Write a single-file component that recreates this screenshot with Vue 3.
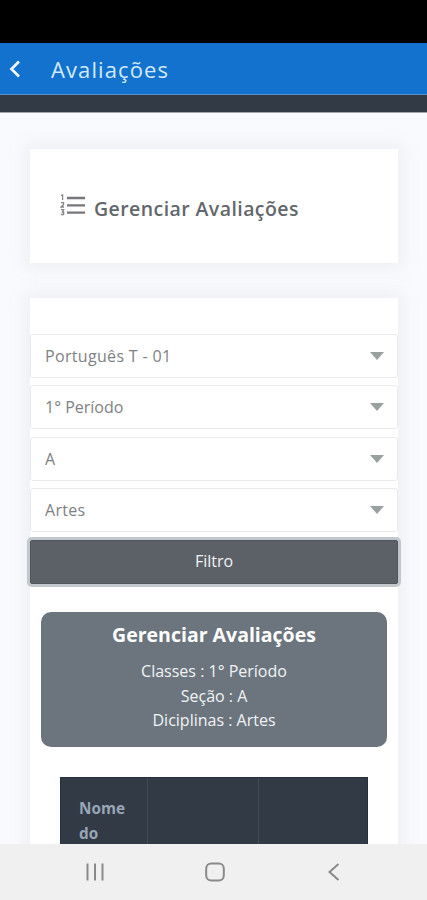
<script setup>
import { ref } from 'vue';

const filters = ref([
  { name: 'curso', value: 'Português T - 01', options: ['Português T - 01'] },
  { name: 'classe', value: '1° Período', options: ['1° Período'] },
  { name: 'secao', value: 'A', options: ['A'] },
  { name: 'disciplina', value: 'Artes', options: ['Artes'] },
]);

const columns = ['Nome do', '', ''];
</script>

<template>
  <div class="screen">
    <div class="status-bar"></div>
    <header class="app-bar">
      <svg class="back-icon" viewBox="0 0 12 18">
        <path d="M10 1.5 L2.5 9 L10 16.5" />
      </svg>
      <span class="app-title">Avaliações</span>
    </header>
    <div class="top-strip"></div>

    <main class="content">
      <section class="card title-card">
        <svg class="list-icon" viewBox="0 0 25 22">
          <path class="lines" d="M7 4 H25 M7 11.3 H25 M7 18.6 H25" />
          <path class="digits" d="M1 1.6 L2.6 1 V6 M1 8.6 H3.5 V10.8 L1 13 H4 M1 15.7 H3.6 L2.4 18 H3.6 V20.5 H.8" />
        </svg>
        <h4 class="page-title">Gerenciar Avaliações</h4>
      </section>

      <section class="card main-card">
        <form class="filters" @submit.prevent>
          <div v-for="filter in filters" :key="filter.name" class="select-box">
            <select v-model="filter.value" class="select" :class="filter.name">
              <option v-for="option in filter.options" :key="option">{{ option }}</option>
            </select>
            <svg class="caret" viewBox="0 0 14 8">
              <path d="M0 0 H14 L7 8 Z" />
            </svg>
          </div>
          <button type="submit" class="filter-button">Filtro</button>
        </form>

        <div class="summary">
          <h4 class="summary-title">Gerenciar Avaliações</h4>
          <p>Classes : 1° Período</p>
          <p>Seção : A</p>
          <p>Diciplinas : Artes</p>
        </div>

        <div class="table">
          <div v-for="(column, index) in columns" :key="index" class="table-head">{{ column }}</div>
        </div>
      </section>
    </main>

    <nav class="nav-bar">
      <svg viewBox="0 0 24 24">
        <path d="M4.5 3.5 V20.5 M12 3.5 V20.5 M19.5 3.5 V20.5" />
      </svg>
      <svg viewBox="0 0 24 24">
        <rect x="3.2" y="3.5" width="17.6" height="17" rx="5" />
      </svg>
      <svg viewBox="0 0 24 24">
        <path d="M16.5 4 L7.5 12 L16.5 20" />
      </svg>
    </nav>
  </div>
</template>

<style>
body {
  background-color: #f9fafd;
}
</style>

<style scoped>
.screen {
  display: flex;
  flex-direction: column;
  height: 900px;
  overflow: hidden;
  background-color: #f9fafd;
  font-family: "Open Sans", "Noto Sans", sans-serif;
}

.status-bar {
  flex: none;
  height: 43px;
  background-color: #000;
}

.app-bar {
  flex: none;
  display: flex;
  align-items: center;
  box-sizing: border-box;
  height: 52px;
  padding-left: 9px;
  background-color: #1272cd;
  border-bottom: 1px solid #5a8fc8;
}

.back-icon {
  width: 12px;
  height: 18px;
  margin-right: 30px;
  fill: none;
  stroke: #f0f8ff;
  stroke-width: 2.7;
}

.app-title {
  color: #d2eaff;
  font-size: 22px;
  letter-spacing: 1.1px;
  line-height: 50px;
}

.top-strip {
  flex: none;
  height: 17px;
  background-color: #323a46;
  border-bottom: 1px solid #a3a7ad;
}

.content {
  flex: 1;
  min-height: 0;
  display: flex;
  flex-direction: column;
  gap: 35px;
  padding: 36px 29px 0 30px;
  overflow: hidden;
}

.card {
  background-color: #fff;
  box-shadow: 0 0 16px 6px rgba(154, 161, 181, 0.1);
}

.title-card {
  flex: none;
  display: flex;
  align-items: center;
  box-sizing: border-box;
  height: 114px;
  padding: 4px 30px 0;
}

.list-icon {
  width: 25px;
  height: 22px;
  margin: -7px 9px 0 0;
  fill: none;
}

.list-icon .lines {
  stroke: #75777b;
  stroke-width: 2.3;
}

.list-icon .digits {
  stroke: #85878b;
  stroke-width: 1.3;
}

.page-title {
  margin: 0;
  color: #63676c;
  font-size: 19.5px;
  font-weight: 600;
  letter-spacing: 0.42px;
  white-space: nowrap;
}

.main-card {
  flex: none;
  height: 700px;
  padding-top: 36px;
}

.filters {
  display: flex;
  flex-direction: column;
  gap: 7.4px;
}

.select-box {
  display: flex;
  align-items: center;
  box-sizing: border-box;
  height: 44px;
  padding-right: 13px;
  border: 1px solid #e9eaec;
  border-radius: 3px;
  background-color: #fff;
}

.select {
  flex: 1;
  height: 42px;
  padding: 0 0 0 14px;
  border: none;
  outline: none;
  appearance: none;
  background: transparent;
  color: #7e8184;
  font-family: inherit;
  font-size: 16px;
}

.select.curso {
  letter-spacing: 0.33px;
}

.select.disciplina {
  letter-spacing: 0.3px;
}

.caret {
  width: 14px;
  height: 8px;
  fill: #98a19f;
}

.filter-button {
  height: 44px;
  margin-top: 0.4px;
  padding: 0 0 2px;
  border: 1px solid #50565d;
  border-radius: 2px;
  background-color: #5c6168;
  box-shadow: 0 0 0 3px #c1c7ca;
  color: #f1f2f4;
  font-family: inherit;
  font-size: 16px;
}

.summary {
  box-sizing: border-box;
  height: 135px;
  margin: 28px 11px 30px;
  padding-top: 9px;
  border-radius: 10px;
  background-color: #6c757d;
  color: #f0f3f6;
  text-align: center;
}

.summary-title {
  margin: 0 0 10px;
  color: #fff;
  font-size: 19.5px;
  font-weight: 700;
  line-height: 28px;
}

.summary p {
  margin: 0;
  font-size: 16px;
  line-height: 24.6px;
}

.table {
  display: grid;
  grid-template-columns: 87px 111px 1fr;
  box-sizing: border-box;
  height: 180px;
  margin: 0 30px;
  border: 1px solid #272e3d;
  background-color: #323a46;
}

.table-head {
  padding: 18px;
  border-right: 1px solid #424a55;
  color: #98a6b5;
  font-size: 15.3px;
  font-weight: 700;
  line-height: 25px;
}

.table-head:last-child {
  border-right: none;
}

.nav-bar {
  flex: none;
  display: flex;
  justify-content: space-between;
  align-items: center;
  box-sizing: border-box;
  height: 56px;
  padding: 0 81px 0 83px;
  background-color: #f0f0f0;
}

.nav-bar svg {
  width: 24px;
  height: 24px;
  fill: none;
  stroke: #8a8a8a;
  stroke-width: 2;
}
</style>
